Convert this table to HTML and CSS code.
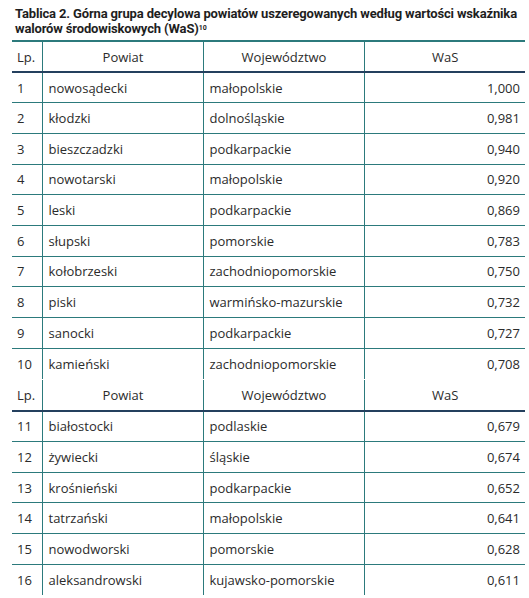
FILE: index.html
```html
<!DOCTYPE html>
<html lang="pl">
<head>
<meta charset="utf-8">
<link rel="stylesheet" href="styles.css">
</head>
<body>
<div class="page">
  <h1 class="title">Tablica 2. Górna grupa decylowa powiatów uszeregowanych według wartości wskaźnika<br>walorów środowiskowych (WaS)<sup>10</sup></h1>
  <table class="tbl first">
    <colgroup><col class="c-lp"><col class="c-w"><col class="c-w"><col class="c-w"></colgroup>
    <thead><tr><th class="lp">Lp.</th><th>Powiat</th><th>Województwo</th><th>WaS</th></tr></thead>
    <tbody>
      <tr><td class="lp">1</td><td>nowosądecki</td><td>małopolskie</td><td class="num">1,000</td></tr>
      <tr><td class="lp">2</td><td>kłodzki</td><td>dolnośląskie</td><td class="num">0,981</td></tr>
      <tr><td class="lp">3</td><td>bieszczadzki</td><td>podkarpackie</td><td class="num">0,940</td></tr>
      <tr><td class="lp">4</td><td>nowotarski</td><td>małopolskie</td><td class="num">0,920</td></tr>
      <tr><td class="lp">5</td><td>leski</td><td>podkarpackie</td><td class="num">0,869</td></tr>
      <tr><td class="lp">6</td><td>słupski</td><td>pomorskie</td><td class="num">0,783</td></tr>
      <tr><td class="lp">7</td><td>kołobrzeski</td><td>zachodniopomorskie</td><td class="num">0,750</td></tr>
      <tr><td class="lp">8</td><td>piski</td><td>warmińsko-mazurskie</td><td class="num">0,732</td></tr>
      <tr><td class="lp">9</td><td>sanocki</td><td>podkarpackie</td><td class="num">0,727</td></tr>
      <tr class="last"><td class="lp">10</td><td>kamieński</td><td>zachodniopomorskie</td><td class="num">0,708</td></tr>
    </tbody>
  </table>
  <table class="tbl second">
    <colgroup><col class="c-lp"><col class="c-w"><col class="c-w"><col class="c-w"></colgroup>
    <thead><tr><th class="lp">Lp.</th><th>Powiat</th><th>Województwo</th><th>WaS</th></tr></thead>
    <tbody>
      <tr><td class="lp">11</td><td>białostocki</td><td>podlaskie</td><td class="num">0,679</td></tr>
      <tr><td class="lp">12</td><td>żywiecki</td><td>śląskie</td><td class="num">0,674</td></tr>
      <tr><td class="lp">13</td><td>krośnieński</td><td>podkarpackie</td><td class="num">0,652</td></tr>
      <tr><td class="lp">14</td><td>tatrzański</td><td>małopolskie</td><td class="num">0,641</td></tr>
      <tr><td class="lp">15</td><td>nowodworski</td><td>pomorskie</td><td class="num">0,628</td></tr>
      <tr class="last"><td class="lp">16</td><td>aleksandrowski</td><td>kujawsko-pomorskie</td><td class="num">0,611</td></tr>
    </tbody>
  </table>
</div>
</body>
</html>
```
FILE: styles.css
```css
html, body {
  margin: 0;
  padding: 0;
  background: #ffffff;
  overflow: hidden;
}
body {
  font-family: "Open Sans", "Noto Sans", sans-serif;
  color: #2b2b2b;
}
.page {
  padding: 6px 4px 0 12px;
}
.title {
  margin: 0 0 4px 3px;
  font-family: Roboto, "Open Sans", sans-serif;
  font-size: 13px;
  line-height: 15px;
  font-weight: 700;
  color: #1e1e1e;
  letter-spacing: -0.15px;
  white-space: nowrap;
}
.title sup {
  font-size: 7px;
  line-height: 1;
  vertical-align: 3px;
  letter-spacing: 0;
}
.tbl {
  width: 513px;
  border-collapse: collapse;
  table-layout: fixed;
  font-size: 13px;
}
.c-lp { width: 30px; }
.c-w { width: 161px; }
.tbl th, .tbl td {
  padding: 0 5px 0 6px;
  height: 30.7px;
  box-sizing: border-box;
  border-left: 1.5px solid #2c7a7c;
  border-bottom: 1.5px solid #2c7a7c;
  white-space: nowrap;
}
.tbl th:first-child, .tbl td:first-child {
  border-left: none;
  padding-left: 5px;
}
.tbl th {
  font-weight: 400;
  text-align: center;
  height: 31px;
  border-bottom: 2px solid #24405e;
}
.tbl th.lp { text-align: left; }
.first thead tr th {
  border-top: 2px solid #2c7a7c;
}
.tbl td.num { text-align: right; }
.tbl tr.last td { border-bottom: none; }
.second {
  margin-top: 1px;
}
```
